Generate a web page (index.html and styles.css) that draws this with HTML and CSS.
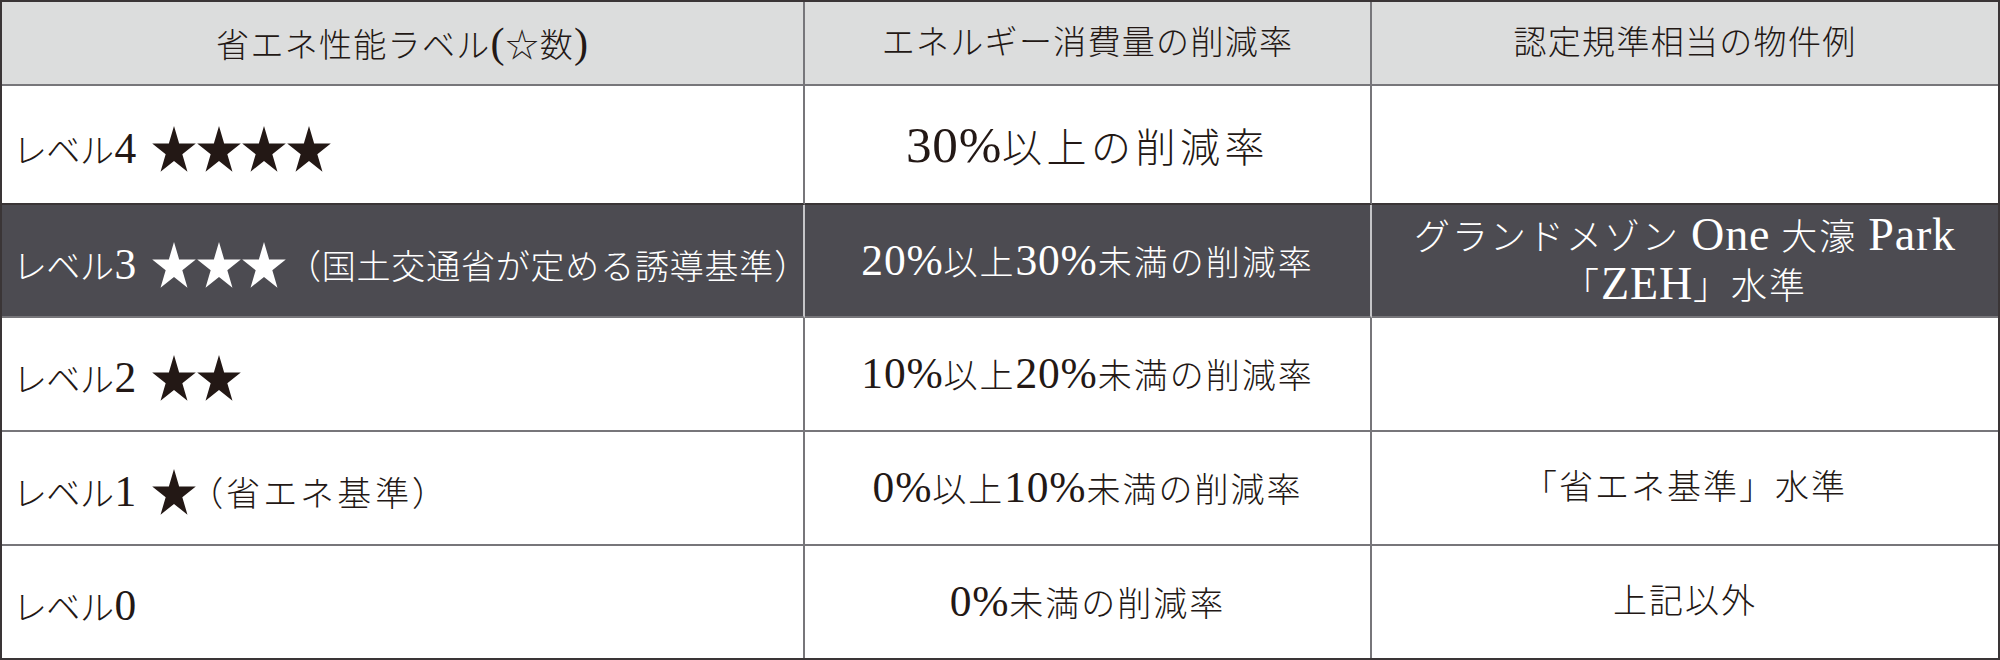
FILE: index.html
```html
<!DOCTYPE html>
<html lang="ja">
<head>
<meta charset="utf-8">
<title>省エネ性能ラベル</title>
<link rel="stylesheet" href="styles.css">
</head>
<body>
<div class="tbl">
  <div class="c h"><p class="t">省エネ性能ラベル<span class="l">(</span>☆数<span class="l">)</span></p></div>
  <div class="c h"><p class="t">エネルギー消費量の削減率</p></div>
  <div class="c h"><p class="t">認定規準相当の物件例</p></div>

  <div class="c lv pre"><p class="t"><span class="kana">レベル</span><span class="l">4</span><span class="stars"><svg class="st" viewBox="-48 -50 96 91" preserveAspectRatio="none"><polygon points="0,-50 11.23,-15.45 47.55,-15.45 18.17,5.9 29.39,40.45 0,19.1 -29.39,40.45 -18.17,5.9 -47.55,-15.45 -11.23,-15.45"/></svg><svg class="st" viewBox="-48 -50 96 91" preserveAspectRatio="none"><polygon points="0,-50 11.23,-15.45 47.55,-15.45 18.17,5.9 29.39,40.45 0,19.1 -29.39,40.45 -18.17,5.9 -47.55,-15.45 -11.23,-15.45"/></svg><svg class="st" viewBox="-48 -50 96 91" preserveAspectRatio="none"><polygon points="0,-50 11.23,-15.45 47.55,-15.45 18.17,5.9 29.39,40.45 0,19.1 -29.39,40.45 -18.17,5.9 -47.55,-15.45 -11.23,-15.45"/></svg><svg class="st" viewBox="-48 -50 96 91" preserveAspectRatio="none"><polygon points="0,-50 11.23,-15.45 47.55,-15.45 18.17,5.9 29.39,40.45 0,19.1 -29.39,40.45 -18.17,5.9 -47.55,-15.45 -11.23,-15.45"/></svg></span></p></div>
  <div class="c pre"><p class="t big"><span class="l">30%</span>以上の削減率</p></div>
  <div class="c pre"></div>

  <div class="c lv dk"><p class="t"><span class="kana">レベル</span><span class="l">3</span><span class="stars"><svg class="st" viewBox="-48 -50 96 91" preserveAspectRatio="none"><polygon points="0,-50 11.23,-15.45 47.55,-15.45 18.17,5.9 29.39,40.45 0,19.1 -29.39,40.45 -18.17,5.9 -47.55,-15.45 -11.23,-15.45"/></svg><svg class="st" viewBox="-48 -50 96 91" preserveAspectRatio="none"><polygon points="0,-50 11.23,-15.45 47.55,-15.45 18.17,5.9 29.39,40.45 0,19.1 -29.39,40.45 -18.17,5.9 -47.55,-15.45 -11.23,-15.45"/></svg><svg class="st" viewBox="-48 -50 96 91" preserveAspectRatio="none"><polygon points="0,-50 11.23,-15.45 47.55,-15.45 18.17,5.9 29.39,40.45 0,19.1 -29.39,40.45 -18.17,5.9 -47.55,-15.45 -11.23,-15.45"/></svg></span><span class="note">（国土交通省が定める誘導基準）</span></p></div>
  <div class="c dk"><p class="t"><span class="l">20%</span>以上<span class="l">30%</span>未満の削減率</p></div>
  <div class="c dk"><p class="t two">グランドメゾン <span class="l">One</span> 大濠 <span class="l">Park</span><br>「<span class="l">ZEH</span>」水準</p></div>

  <div class="c lv"><p class="t"><span class="kana">レベル</span><span class="l">2</span><span class="stars"><svg class="st" viewBox="-48 -50 96 91" preserveAspectRatio="none"><polygon points="0,-50 11.23,-15.45 47.55,-15.45 18.17,5.9 29.39,40.45 0,19.1 -29.39,40.45 -18.17,5.9 -47.55,-15.45 -11.23,-15.45"/></svg><svg class="st" viewBox="-48 -50 96 91" preserveAspectRatio="none"><polygon points="0,-50 11.23,-15.45 47.55,-15.45 18.17,5.9 29.39,40.45 0,19.1 -29.39,40.45 -18.17,5.9 -47.55,-15.45 -11.23,-15.45"/></svg></span></p></div>
  <div class="c"><p class="t"><span class="l">10%</span>以上<span class="l">20%</span>未満の削減率</p></div>
  <div class="c"></div>

  <div class="c lv"><p class="t"><span class="kana">レベル</span><span class="l">1</span><span class="stars"><svg class="st" viewBox="-48 -50 96 91" preserveAspectRatio="none"><polygon points="0,-50 11.23,-15.45 47.55,-15.45 18.17,5.9 29.39,40.45 0,19.1 -29.39,40.45 -18.17,5.9 -47.55,-15.45 -11.23,-15.45"/></svg></span><span class="note sm">（省エネ基準）</span></p></div>
  <div class="c"><p class="t"><span class="l">0%</span>以上<span class="l">10%</span>未満の削減率</p></div>
  <div class="c"><p class="t">「省エネ基準」水準</p></div>

  <div class="c lv"><p class="t"><span class="kana">レベル</span><span class="l">0</span></p></div>
  <div class="c"><p class="t"><span class="l">0%</span>未満の削減率</p></div>
  <div class="c"><p class="t">上記以外</p></div>
</div>
</body>
</html>
```

FILE: styles.css
```css
html, body {
  margin: 0;
  padding: 0;
  background: #ffffff;
}

body {
  width: 2000px;
  height: 660px;
  overflow: hidden;
}

.tbl {
  box-sizing: border-box;
  width: 2000px;
  height: 660px;
  border: 2px solid #3a3536;
  display: grid;
  grid-template-columns: 803px 567px 626px;
  grid-template-rows: 84px 119px 113px 114px 114px 112px;
  font-family: "Liberation Serif", "Noto Sans CJK JP", serif;
  font-weight: 300;
  color: #231815;
}

.c {
  box-sizing: border-box;
  display: flex;
  align-items: center;
  justify-content: center;
  border-right: 2px solid #77767a;
  border-bottom: 2px solid #77767a;
  font-size: 34px;
  letter-spacing: 2px;
  white-space: nowrap;
  min-width: 0;
}

.c:nth-child(3n) {
  border-right: none;
}

.c:nth-last-child(-n+3) {
  border-bottom: none;
}

.t {
  margin: 0;
  line-height: 1;
}

.h {
  background: #dcdddd;
  font-size: 33px;
  letter-spacing: 1.3px;
}

.pre {
  border-bottom-color: #3a3536;
}

.dk {
  background: #4c4b51;
  color: #ffffff;
  border-right-color: #c5c5c8;
}

.lv {
  justify-content: flex-start;
  padding-left: 13px;
  padding-top: 8px;
}

.l {
  font-family: "Liberation Serif", serif;
  font-size: 1.28em;
  letter-spacing: 0.8px;
}

.kana {
  font-feature-settings: "palt";
  letter-spacing: 1px;
}

.stars {
  display: inline-block;
  margin-left: 15px;
  vertical-align: -9px;
  line-height: 0;
}

.st {
  display: inline-block;
  width: 44px;
  height: 46px;
  margin-right: 1px;
  fill: currentColor;
}

.note {
  letter-spacing: 0.8px;
}

.note.sm {
  font-feature-settings: "palt";
  letter-spacing: 4px;
  margin-left: 8px;
}

.big {
  font-size: 40px;
  letter-spacing: 4.5px;
}

.two {
  font-size: 36px;
  line-height: 46px;
  text-align: center;
  letter-spacing: 2px;
}
```
